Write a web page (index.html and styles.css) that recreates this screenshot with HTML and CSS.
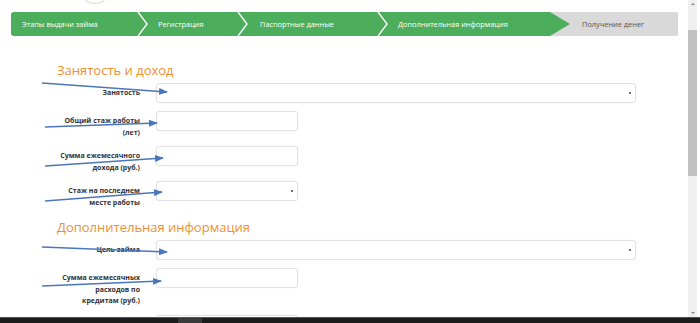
FILE: index.html
```html
<!DOCTYPE html>
<html lang="ru">
<head>
    <meta charset="UTF-8">
    <meta name="viewport" content="width=device-width, initial-scale=1.0">
    <title>Занятость и доход</title>
    <link rel="stylesheet" href="styles.css">
</head>
<body>

<div class="screen">
    <div class="window">
        <div class="page">
            <div class="logo"></div>

            <div class="steps">
                <div class="step s1">Этапы выдачи займа</div>
                <svg class="sep" width="12" height="24"><polyline points="1,0 10,12 1,24" /></svg>
                <div class="step s2">Регистрация</div>
                <svg class="sep" width="12" height="24"><polyline points="1,0 10,12 1,24" /></svg>
                <div class="step s3">Паспортные данные</div>
                <svg class="sep" width="12" height="24"><polyline points="1,0 10,12 1,24" /></svg>
                <div class="step s4">Дополнительная информация</div>
                <svg class="last-sep" width="20" height="24"><polygon points="0,0 20,12 0,24" /></svg>
                <div class="step current">Получение денег</div>
            </div>

            <form class="form">
                <h2>Занятость и доход</h2>
                <div class="row">
                    <label>Занятость</label>
                    <div class="select wide"><span class="caret"></span></div>
                </div>
                <div class="row">
                    <label>Общий стаж работы (лет)</label>
                    <input class="short" type="text">
                </div>
                <div class="row">
                    <label>Сумма ежемесячного дохода (руб.)</label>
                    <input class="short" type="text">
                </div>
                <div class="row">
                    <label>Стаж на последнем месте работы</label>
                    <div class="select short"><span class="caret"></span></div>
                </div>

                <h2>Дополнительная информация</h2>
                <div class="row">
                    <label>Цель займа</label>
                    <div class="select wide"><span class="caret"></span></div>
                </div>
                <div class="row">
                    <label>Сумма ежемесячных расходов по кредитам (руб.)</label>
                    <input class="short" type="text">
                </div>
                <div class="row">
                    <label>&nbsp;</label>
                    <input class="short" type="text">
                </div>
            </form>

            <!-- annotation arrows drawn over the form -->
            <svg class="arrows" width="688" height="318">
                <defs>
                    <marker id="head" markerWidth="9" markerHeight="7" refX="8" refY="3.5" orient="auto" markerUnits="userSpaceOnUse">
                        <polygon points="0,0 9,3.5 0,7" fill="#4a76bd" />
                    </marker>
                </defs>
                <line x1="42" y1="83" x2="167" y2="92" marker-end="url(#head)" />
                <line x1="45" y1="127" x2="157" y2="123" marker-end="url(#head)" />
                <line x1="45" y1="166" x2="163" y2="158" marker-end="url(#head)" />
                <line x1="45" y1="201" x2="162" y2="192" marker-end="url(#head)" />
                <line x1="42" y1="247" x2="167" y2="252" marker-end="url(#head)" />
                <line x1="42" y1="286" x2="161" y2="281" marker-end="url(#head)" />
            </svg>
        </div>

        <div class="scrollbar">
            <div class="arrow-up"></div>
            <div class="track"><div class="thumb"></div></div>
            <div class="arrow-down"></div>
        </div>
    </div>
    <div class="taskbar"><div class="task"></div></div>
</div>

</body>
</html>
```

FILE: styles.css
```css
body {
    margin: 0;
    font-family: "Open Sans", "DejaVu Sans", sans-serif;
    background: #fff;
}
.screen {
    width: 700px;
    height: 323px;
    display: flex;
    flex-direction: column;
    overflow: hidden;
}
.window {
    position: relative;
    flex: 1;
    display: flex;
    overflow: hidden;
}
.page {
    width: 688px;
    overflow: hidden;
}
.logo {
    width: 18px;
    height: 8px;
    margin: -6px 0 0 85px;
    border: 1px solid #d4d4d4;
    border-radius: 50%;
}
.steps {
    display: flex;
    height: 24px;
    margin: 8px 0 0 11px;
    width: 667px;
    background: #d9d9d9;
    border-radius: 3px;
    overflow: hidden;
    font-size: 7.4px;
    line-height: 24px;
}
.step {
    flex: none;
    box-sizing: border-box;
    color: #fff;
    background: #4cae5c;
    white-space: nowrap;
}
.s1 { width: 126px; padding-left: 11px; }
.s2 { width: 88px; padding-left: 9px; }
.s3 { width: 128px; padding-left: 11px; }
.s4 { width: 161px; padding-left: 9px; }
.step.current {
    flex: 1;
    color: #555;
    background: #d9d9d9;
    padding-left: 12px;
}
.sep {
    flex: none;
    background: #4cae5c;
}
.sep polyline {
    fill: none;
    stroke: #fff;
    stroke-width: 1.4;
}
.last-sep {
    flex: none;
    background: #d9d9d9;
}
.last-sep polygon {
    fill: #4cae5c;
}
.form {
    padding: 0 0 0 60px;
    margin: 0;
}
.form h2 {
    font-size: 13px;
    font-weight: 400;
    line-height: 20px;
    color: #ef8f2f;
    margin: 24px 0 3px -3px;
}
.form .row + h2 {
    margin-top: 9px;
}
.row {
    display: flex;
    gap: 16px;
    margin-bottom: 8px;
}
.row label {
    flex: none;
    width: 80px;
    box-sizing: border-box;
    padding-top: 4px;
    text-align: right;
    font-size: 7px;
    font-weight: 700;
    line-height: 11.5px;
    color: #333;
}
.row input, .select {
    box-sizing: border-box;
    height: 20px;
    margin: 0;
    padding: 0 6px;
    border: 1px solid #e2e2e2;
    border-radius: 3px;
    background: #fff;
    box-shadow: 0 0 2px rgba(0, 0, 0, 0.06);
    font: inherit;
}
.wide {
    width: 480px;
}
.short {
    width: 142px;
}
.select {
    display: flex;
    align-items: center;
    justify-content: flex-end;
    padding-right: 4px;
}
.caret {
    width: 2px;
    height: 2px;
    background: #444;
    border-radius: 1px;
}
.arrows {
    position: absolute;
    top: 0;
    left: 0;
    pointer-events: none;
}
.arrows line {
    stroke: #4a76bd;
    stroke-width: 1.3;
}
.scrollbar {
    width: 9px;
    margin-right: 3px;
    background: #f0f0f0;
    display: flex;
    flex-direction: column;
    align-items: center;
}
.arrow-up, .arrow-down {
    width: 0;
    height: 0;
    border-left: 2px solid transparent;
    border-right: 2px solid transparent;
}
.arrow-up {
    margin: 3px 0 25px;
    border-bottom: 2px solid #888;
}
.arrow-down {
    margin: 0 0 3px;
    border-top: 2px solid #888;
}
.track {
    flex: 1;
    width: 100%;
}
.thumb {
    width: 100%;
    height: 146px;
    background: #c1c1c1;
}
.taskbar {
    height: 5px;
    background: #1c1c1c;
    border-top: 1px solid #555;
}
.task {
    width: 24px;
    height: 5px;
    margin-left: 178px;
    background: #3a3a3a;
}
```
